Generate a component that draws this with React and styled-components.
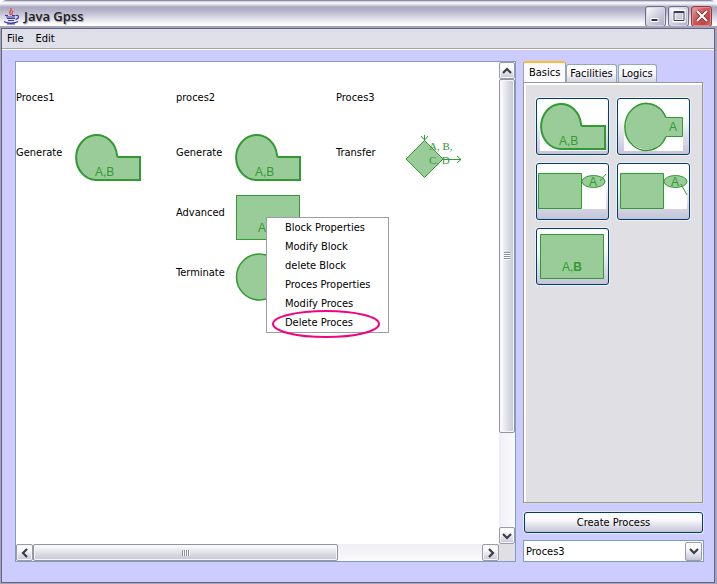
import React from "react";
import styled, { createGlobalStyle, css } from "styled-components";

const Global = createGlobalStyle`
  * { box-sizing: border-box; }
  body { margin: 0; background: #fff; }
  body, button, select {
    font-family: "DejaVu Sans Condensed", "DejaVu Sans", sans-serif;
    font-size: 11px;
    line-height: 16px;
    color: #000;
  }
  button { margin: 0; padding: 0; }
`;

const GREEN = "#339933";
const FILL = "#99cc99";

const silver = "linear-gradient(#fff 0%, #fafafd 35%, #dddde9 70%, #c4c4d8 100%)";

const Window = styled.div`
  min-height: 100vh;
  display: flex;
  flex-direction: column;
  background: #ccccff;
  border-radius: 7px 7px 0 0;
  overflow: hidden;
`;

const TitleBar = styled.header`
  height: 28px;
  display: flex;
  align-items: center;
  gap: 4px;
  padding: 3px 5px 0 4px;
  border-top: 1px solid #8c8ba6;
  background: linear-gradient(#c6c5d7 0, #fff 2px, #e9e9f1 3px, #a9a8c0 6px, #b6b5ca 10px, #dcdbe6 17px, #fbfbfd 23px, #fff 25px, #c9c9d8 27px);
`;

const Title = styled.h1`
  flex: 1;
  margin: 0;
  padding-bottom: 1px;
  font: 600 13px/20px "Open Sans", "Noto Sans", sans-serif;
  color: #1c1e20;
  text-shadow: 1px 1px 1px #9a9ab5;
`;

const WindowButtons = styled.div`
  display: flex;
  gap: 2px;
`;

const WindowButton = styled.button`
  width: 21px;
  height: 21px;
  display: grid;
  place-items: center;
  border: 1px solid ${(p) => (p.$danger ? "#8a3d4b" : "#6d6d8c")};
  border-radius: 3px;
  background: ${(p) =>
    p.$danger
      ? "linear-gradient(135deg, #eab0b0, #d46060 35%, #c34448 75%, #d97070)"
      : "linear-gradient(135deg, #fff, #d4d4e2 45%, #aaaac4)"};
  box-shadow: inset 0 0 0 1px ${(p) => (p.$danger ? "#e0898a" : "#d9d9e6")};
`;

const Frame = styled.div`
  flex: 1;
  display: flex;
  flex-direction: column;
  border: 1px solid #64637f;
  margin: 0 2px 1px 1px;
  box-shadow: 0 0 0 2px #a5a4bb;
`;

const MenuBar = styled.nav`
  height: 21px;
  display: flex;
  align-items: center;
  background: linear-gradient(#dedfe9, #e0e1e8);
  border-bottom: 1px solid #fff;
  box-shadow: inset 0 -1px #a3a5aa;
`;

const MenuButton = styled.button`
  border: 0;
  background: none;
  padding: 0 7px 0 5px;
`;

const Content = styled.main`
  flex: 1;
  display: grid;
  grid-template-columns: minmax(0, 1fr) 181px;
  gap: 7px;
  padding: 11px 10px 20px 13px;
`;

const Viewport = styled.section`
  display: grid;
  grid-template-columns: minmax(0, 1fr) 16px;
  grid-template-rows: minmax(0, 1fr) 17px;
  border: 1px solid #7f9db9;
  background: #e0dfe3;
`;

const Canvas = styled.div`
  position: relative;
  display: flex;
  background: #fff;
  overflow: hidden;
`;

const Process = styled.section`
  flex: none;
  width: 160px;
`;

const ProcessName = styled.h2`
  margin: 0;
  height: 60px;
  padding-top: 28px;
  font: inherit;
`;

const Block = styled.div`
  height: 60px;
  display: grid;
  grid-template-columns: 60px 1fr;
  align-items: center;
`;

const BlockName = styled.span`
  padding-top: 2px;
`;

const Drawing = styled.svg`
  display: block;
  overflow: visible;
  fill: ${FILL};
  stroke: ${GREEN};

  text {
    fill: ${GREEN};
    stroke: none;
    font-size: ${(p) => (p.$serif ? 11 : 12)}px;
    font-family: ${(p) => (p.$serif ? '"Liberation Serif", serif' : '"Liberation Sans", sans-serif')};
  }
`;

const ContextMenu = styled.menu`
  position: absolute;
  left: 250px;
  top: 155px;
  width: 123px;
  margin: 0;
  padding: 0;
  list-style: none;
  border: 1px solid #9d9da1;
  background: #fff;
`;

const ContextItem = styled.button`
  display: block;
  width: 100%;
  height: 19px;
  border: 0;
  padding: 1px 0 0 18px;
  background: none;
  text-align: left;
  white-space: nowrap;
`;

const Highlight = styled.svg`
  position: absolute;
  left: 4px;
  bottom: -7px;
  pointer-events: none;
`;

const Scrollbar = styled.div`
  display: flex;
  flex-direction: ${(p) => (p.$vertical ? "column" : "row")};
  background: linear-gradient(${(p) => (p.$vertical ? "to right" : "to bottom")}, #eeeef4, #fbfbfd);
`;

const gradientAlong = css`
  background: linear-gradient(${(p) => (p.$vertical ? "to right" : "to bottom")}, #fff, #e9e9ef 35%, #d8d8e2 65%, #c6c6d8);
`;

const ScrollButton = styled.button`
  flex: none;
  width: ${(p) => (p.$vertical ? "100%" : "17px")};
  height: 17px;
  display: grid;
  place-items: center;
  border: 1px solid #9b9ba8;
  border-radius: 2px;
  background: ${silver};
  box-shadow: inset 0 0 0 1px #f6f6fa;
`;

const Track = styled.div`
  flex: 1;
  display: flex;
  flex-direction: ${(p) => (p.$vertical ? "column" : "row")};
`;

const Thumb = styled.div`
  flex: 0 0 ${(p) => p.$share};
  display: grid;
  place-items: center;
  border: 1px solid #94949f;
  border-radius: 2px;
  box-shadow: inset 0 0 0 1px #f6f6fa;
  ${gradientAlong}
`;

const Grip = styled.div`
  width: ${(p) => (p.$vertical ? 6 : 8)}px;
  height: ${(p) => (p.$vertical ? 8 : 6)}px;
  background: repeating-linear-gradient(${(p) => (p.$vertical ? "to bottom" : "to right")}, #8e8e9c 0 1px, #fff 1px 2px);
`;

const Side = styled.aside`
  display: flex;
  flex-direction: column;
`;

const Tabs = styled.div`
  display: flex;
  align-items: flex-end;
  height: 21px;
`;

const Tab = styled.button`
  height: ${(p) => (p.$active ? 21 : 18)}px;
  padding: ${(p) => (p.$active ? "0 5px" : "1px 3px 0")};
  margin-right: ${(p) => (p.$active ? 0 : 1)}px;
  border: 1px solid #91a7b4;
  border-bottom: 0;
  border-radius: 3px 3px 0 0;
  background: linear-gradient(#fff, #f8f8fc 50%, #d2d2e2);
  white-space: nowrap;
  ${(p) =>
    p.$active &&
    css`
      background: #fcfcfe;
      border-top: 2px solid #fdbb30;
    `}
`;

const Palette = styled.div`
  flex: 1;
  display: grid;
  grid-template-columns: repeat(2, 73px);
  grid-auto-rows: 57px;
  align-content: start;
  gap: 8px;
  padding: 15px 0 0 12px;
  border: 1px solid #919b9c;
  background: #e0dfe3;
  box-shadow: inset 2px 2px #fff, 1px 1px #d9d9d8;
  margin-right: 1px;
`;

const PaletteButton = styled.button`
  border: 1px solid #003c74;
  border-radius: 3px;
  overflow: hidden;
  background: ${silver};
  box-shadow: 0 0 0 1px #f0f0ea;
  /* the drawing spans the whole button, frame included */
  svg { margin: -1px; }
`;

const CreateButton = styled.button`
  height: 21px;
  margin: 9px 1px 7px;
  padding-top: 1px;
  border: 1px solid #003c74;
  border-radius: 3px;
  background: ${silver};
  box-shadow: 0 0 0 1px #e8e8ea;
`;

const SelectBox = styled.label`
  display: grid;
  grid-template-columns: 1fr 17px;
  align-items: center;
  height: 22px;
  padding: 0 1px;
  border: 1px solid #7f9db9;
  background: #fff;
`;

const Select = styled.select`
  grid-area: 1 / 1 / 2 / 3;
  appearance: none;
  width: 100%;
  height: 20px;
  border: 0;
  padding: 2px 18px 0 1px;
  background: transparent;
`;

const SelectArrow = styled.span`
  grid-area: 1 / 2;
  height: 19px;
  display: grid;
  place-items: center;
  border: 1px solid #9b9ba8;
  border-radius: 2px;
  background: ${silver};
  pointer-events: none;
`;

const arrows = {
  up: "M1 7 5 3 9 7",
  down: "M1 3 5 7 9 3",
  left: "M7 1 3 5 7 9",
  right: "M3 1 7 5 3 9",
};

const Arrow = ({ to }) => (
  <svg width="10" height="10" viewBox="0 0 10 10" fill="none" stroke="#3c3c42" strokeWidth="2.2" aria-hidden="true">
    <path d={arrows[to]} />
  </svg>
);

const JavaLogo = () => (
  <svg width="16" height="17" viewBox="0 0 16 17" fill="none" aria-hidden="true">
    <path d="M7 7C3 4 8 4 7 0M8 7C7 5 10 4 8 3" stroke="#dd4a3a" strokeWidth="1.3" />
    <path d="M1 7.500h3M8 7.500h3M2 9h9M11.500 7.500c4-1 4 3 0 4M3 10.500h8M4 12.500h6M0 13.500c2 2 11 2 14 0M3 15.800h8" stroke="#3a3ab0" strokeWidth="1.2" />
  </svg>
);

const Generate = () => (
  <Drawing width="90" height="60" viewBox="0 0 90 60">
    <path strokeWidth="2" d="M20 58A20.500 22.500 0 1 1 41 33Q41 35 43 35H64V58Z" />
    <text x="19" y="54">A,B</text>
  </Drawing>
);

const Advanced = () => (
  <Drawing width="90" height="60" viewBox="0 0 90 60">
    <rect x="0.500" y="13.500" width="63" height="44" />
    <text x="22" y="50">A,B</text>
  </Drawing>
);

const Terminate = () => (
  <Drawing width="90" height="60" viewBox="0 0 90 60">
    <circle cx="23.500" cy="35" r="23" strokeWidth="1.500" />
  </Drawing>
);

const Transfer = () => (
  <Drawing width="90" height="60" viewBox="0 0 90 60" $serif>
    <path d="M28.500 18.500 47 37 28.500 55.500 10 37Z" />
    <path fill="none" d="M28.500 13v6M25 14l3.500 4 3.500-4M47 37.500h18M61 34l4 3.500-4 3.500" />
    <text x="33" y="28">A, B,</text>
    <text x="33" y="42">C, D</text>
  </Drawing>
);

const processes = [
  { name: "Proces1", blocks: [["Generate", Generate]] },
  { name: "proces2", blocks: [["Generate", Generate], ["Advanced", Advanced], ["Terminate", Terminate]] },
  { name: "Proces3", blocks: [["Transfer", Transfer]] },
];

const paletteItems = [
  {
    label: "Generate",
    art: (
      <>
        <path fill="#fff" stroke="none" d="M4 5h66v48H4z" />
        <path strokeWidth="2" d="M25 51A20 22.500 0 1 1 45 26Q45 28 47 28H69V51Z" />
        <text x="23" y="47">A,B</text>
      </>
    ),
  },
  {
    label: "Terminate",
    art: (
      <>
        <path fill="#fff" stroke="none" d="M7 4h59v49H7z" />
        <path stroke="none" d="M49 19.500h16.500v19H49z" />
        <ellipse cx="29.500" cy="28" rx="21.500" ry="23.500" stroke="none" />
        <path fill="none" strokeWidth="1.500" d="M49 19.500A21.500 23.500 0 1 0 49 38.500" />
        <path fill="none" d="M49 19.500H65.500V38.500H49" />
        <text x="52" y="33">A</text>
      </>
    ),
  },
  {
    label: "Logic gate up",
    art: (
      <>
        <path fill="#fff" stroke="none" d="M2 9h68v37H2z" />
        <path d="M2.500 10.500h43v35h-43z" />
        <ellipse cx="57.500" cy="18.500" rx="11.500" ry="6" />
        <path d="M64 18l6-7" />
        <text x="53" y="23">A</text>
      </>
    ),
  },
  {
    label: "Logic gate down",
    art: (
      <>
        <path fill="#fff" stroke="none" d="M3 9h67v37H3z" />
        <path d="M3.500 10.500h43v35h-43z" />
        <ellipse cx="58.500" cy="18.500" rx="11.500" ry="6" />
        <path d="M64 21l6 11" />
        <text x="54" y="23">A</text>
      </>
    ),
  },
  {
    label: "Advanced",
    art: (
      <>
        <path d="M4.500 6.500h63v44h-63z" />
        <text x="26" y="43">A,<tspan fontWeight="bold">B</tspan></text>
      </>
    ),
  },
];

const menuItems = ["Block Properties", "Modify Block", "delete Block", "Proces Properties", "Modify Proces", "Delete Proces"];

const ScrollControl = ({ vertical, share }) => (
  <Scrollbar $vertical={vertical}>
    <ScrollButton $vertical={vertical} aria-label={vertical ? "Scroll up" : "Scroll left"}>
      <Arrow to={vertical ? "up" : "left"} />
    </ScrollButton>
    <Track $vertical={vertical}>
      <Thumb $vertical={vertical} $share={share}>
        <Grip $vertical={vertical} />
      </Thumb>
    </Track>
    <ScrollButton $vertical={vertical} aria-label={vertical ? "Scroll down" : "Scroll right"}>
      <Arrow to={vertical ? "down" : "right"} />
    </ScrollButton>
  </Scrollbar>
);

export default function App() {
  return (
    <>
      <Global />
      <Window>
        <TitleBar>
          <JavaLogo />
          <Title>Java Gpss</Title>
          <WindowButtons>
            <WindowButton aria-label="Minimize">
              <svg width="14" height="14"><path d="M2 9.500h7v3H2z" fill="#2f2f55" stroke="#fff" /></svg>
            </WindowButton>
            <WindowButton aria-label="Maximize">
              <svg width="14" height="14" fill="none"><path d="M2 2h10v10H2z" stroke="#fff" strokeWidth="3" /><path d="M2 2.500h10v9H2z" stroke="#3a3a5c" /><path d="M2 3h10" stroke="#3a3a5c" strokeWidth="2" /></svg>
            </WindowButton>
            <WindowButton $danger aria-label="Close">
              <svg width="14" height="14" fill="none"><path d="M2 2 12 12M12 2 2 12" stroke="#6b1f2a" strokeWidth="3.500" /><path d="M2 2 12 12M12 2 2 12" stroke="#fff" strokeWidth="2.200" /></svg>
            </WindowButton>
          </WindowButtons>
        </TitleBar>
        <Frame>
          <MenuBar>
            <MenuButton>File</MenuButton>
            <MenuButton>Edit</MenuButton>
          </MenuBar>
          <Content>
            <Viewport>
              <Canvas>
                {processes.map((process) => (
                  <Process key={process.name}>
                    <ProcessName>{process.name}</ProcessName>
                    {process.blocks.map(([label, Shape]) => (
                      <Block key={label}>
                        <BlockName>{label}</BlockName>
                        <Shape />
                      </Block>
                    ))}
                  </Process>
                ))}
                <ContextMenu>
                  {menuItems.map((item) => (
                    <li key={item}><ContextItem>{item}</ContextItem></li>
                  ))}
                  <Highlight width="112" height="30" fill="none" stroke="#f0047f" strokeWidth="2">
                    <ellipse cx="55" cy="15" rx="53" ry="13" />
                  </Highlight>
                </ContextMenu>
              </Canvas>
              <ScrollControl vertical share="79%" />
              <ScrollControl share="68%" />
            </Viewport>
            <Side>
              <Tabs role="tablist">
                <Tab $active role="tab" aria-selected="true">Basics</Tab>
                <Tab role="tab" aria-selected="false">Facilities</Tab>
                <Tab role="tab" aria-selected="false">Logics</Tab>
              </Tabs>
              <Palette role="tabpanel" aria-label="Basics">
                {paletteItems.map((item) => (
                  <PaletteButton key={item.label} aria-label={item.label}>
                    <Drawing width="73" height="57" viewBox="0 0 73 57">{item.art}</Drawing>
                  </PaletteButton>
                ))}
              </Palette>
              <CreateButton>Create Process</CreateButton>
              <SelectBox>
                <Select aria-label="Process" defaultValue="Proces3">
                  {processes.map((process) => (
                    <option key={process.name}>{process.name}</option>
                  ))}
                </Select>
                <SelectArrow><Arrow to="down" /></SelectArrow>
              </SelectBox>
            </Side>
          </Content>
        </Frame>
      </Window>
    </>
  );
}
